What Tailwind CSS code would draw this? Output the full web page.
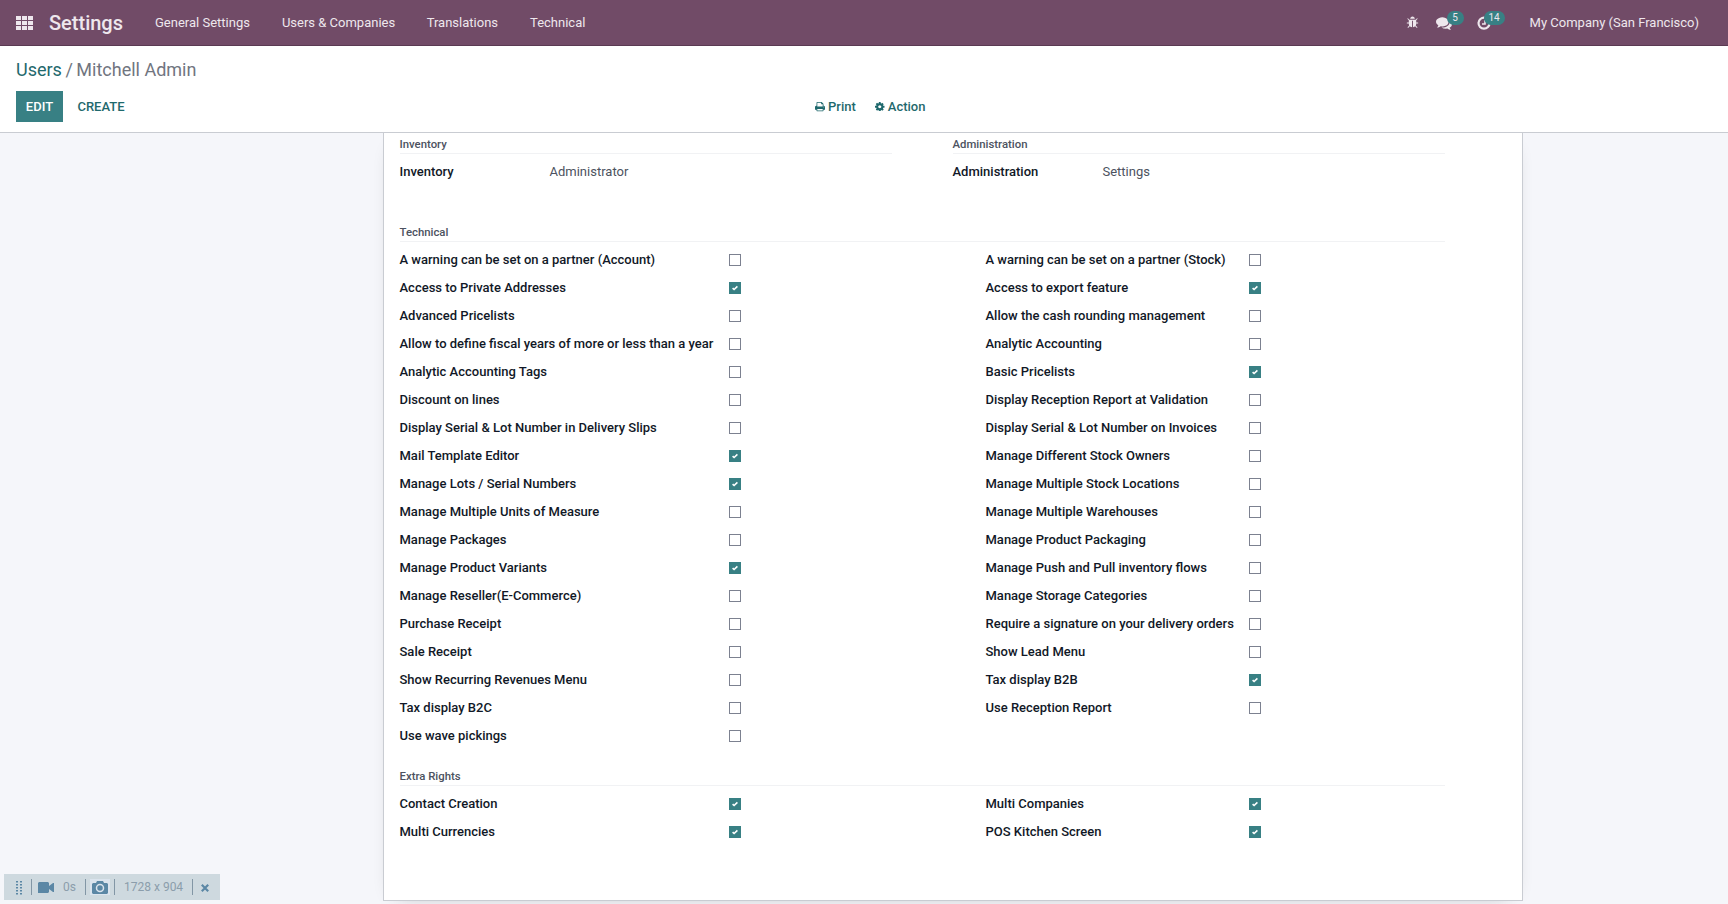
<!DOCTYPE html>
<html lang="en">
<head>
<meta charset="utf-8">
<title>Mitchell Admin - Settings</title>
<script src="https://cdn.jsdelivr.net/npm/@tailwindcss/browser@4"></script>
</head>
<body class="h-[904px] overflow-hidden bg-[#f5f6fa] font-['Roboto',sans-serif] text-[13px] leading-5 text-[#4c5260]">
<div class="flex h-full flex-col">
  <header class="flex h-[46px] shrink-0 items-center border-b border-[#5a3a52] bg-[#714b67] pl-4 pr-[29px] text-[#eee7ed]">
    <svg class="h-[14px] w-[17px]" viewBox="0 0 17 14" fill="currentColor"><path d="M0 0h5v4H0zM6 0h5v4H6zM12 0h5v4h-5zM0 5h5v4H0zM6 5h5v4H6zM12 5h5v4h-5zM0 10h5v4H0zM6 10h5v4H6zM12 10h5v4h-5z"/></svg>
    <h1 class="ml-4 w-[106px] text-xl font-medium">Settings</h1>
    <nav class="flex gap-8">
      <a>General Settings</a><a>Users &amp; Companies</a><a class="-ml-[0.500px]">Translations</a><a>Technical</a>
    </nav>
    <div class="ml-auto flex items-center">
      <svg class="size-[13px]" viewBox="0 0 1792 1792" fill="currentColor"><path d="M1696 960q0 26-19 45t-45 19h-224q0 171-67 290l208 209q19 19 19 45t-19 45q-18 19-45 19t-45-19l-198-197q-5 5-15 13t-42 28.500-65 36.500-82 29-97 13v-896h-128v896q-51 0-101.500-13.500t-87-33-66-39-43.500-32.500l-15-14-183 207q-20 21-48 21-24 0-43-16-19-18-20.500-44.500t15.500-46.500l202-227q-58-114-58-274h-224q-26 0-45-19t-19-45 19-45 45-19h224v-294l-173-173q-19-19-19-45t19-45 45-19 45 19l173 173h844l173-173q19-19 45-19t45 19 19 45-19 45l-173 173v294h224q26 0 45 19t19 45zm-480-576h-640q0-133 93.500-226.500t226.500-93.500 226.500 93.500 93.500 226.500z"/></svg>
      <div class="relative ml-[17px] mr-[25px]">
        <svg class="size-4" viewBox="0 0 1792 1792" fill="currentColor"><path d="M1408 768q0 139-94 257t-256.500 186.500-353.500 68.500q-86 0-176-16-124 88-278 128-36 9-86 16h-3q-11 0-20.500-8t-11.500-21q-1-3-1-6.500t.5-6.500 2-6l2.500-5 3.500-5.500 4-5 4.500-5 4-4.500q5-6 23-25t26-29.500 22.500-29 25-38.500 20.500-44q-124-72-195-177t-71-224q0-139 94-257t256.500-186.500 353.500-68.500 353.500 68.500 256.500 186.500 94 257zm384 256q0 120-71 224.500t-195 176.500q10 24 20.500 44t25 38.500 22.500 29 26 29.500 23 25q1 1 4 4.500t4.500 5 4 5 3.500 5.500l2.500 5 2 6 .5 6.500-1 6.500q-3 14-13 22t-22 7q-50-7-86-16-154-40-278-128-90 16-176 16-271 0-472-132 58 4 88 4 161 0 309-45t264-129q125-92 192-212t67-254q0-77-23-152 129 71 204 178t75 230z"/></svg>
        <span class="absolute -top-1 left-[11px] flex h-[14px] w-[17px] items-center justify-center rounded-full bg-[#388084] text-[10px] leading-none">5</span>
      </div>
      <div class="relative mr-[39px]">
        <svg class="size-[14px]" viewBox="0 0 14 14" fill="none" stroke="currentColor"><path stroke-width="2.200" d="M7.500 1.700A5.500 5.500 0 1 0 12.500 7"/><path stroke-width="1.600" d="M8 4v4H5"/></svg>
        <span class="absolute -top-[5px] left-[7px] flex h-[14px] w-[21px] items-center justify-center rounded-full bg-[#388084] text-[10px] leading-none">14</span>
      </div>
      <span>My Company (San Francisco)</span>
    </div>
  </header>

  <div class="z-10 flex h-[87px] shrink-0 flex-col border-b border-[#c9ccd2] bg-white px-4">
    <div class="mt-3 text-lg leading-6 text-[#71757f]"><a class="text-[#1f696d]">Users</a><span class="mx-[3.500px]">/</span>Mitchell Admin</div>
    <div class="mt-[9px] flex h-[31px] items-center font-medium text-[#1f696d]">
      <button class="h-full w-[47px] bg-[#388084] text-white">EDIT</button>
      <button class="ml-[14px] w-12">CREATE</button>
      <button class="ml-[690px] flex items-center gap-[3px]"><svg class="size-[10px]" viewBox="64 128 1664 1664" fill="currentColor"><path d="M448 1536h896v-256h-896v256zm0-640h896v-384h-160q-40 0-68-28t-28-68v-160h-640v640zm1152 64q0-26-19-45t-45-19-45 19-19 45 19 45 45 19 45-19 19-45zm128 0v416q0 13-9.500 22.500t-22.500 9.500h-224v160q0 40-28 68t-68 28h-960q-40 0-68-28t-28-68v-160h-224q-13 0-22.500-9.500t-9.500-22.500v-416q0-79 56.500-135.500t135.500-56.500h64v-544q0-40 28-68t68-28h672q40 0 88 20t76 48l152 152q28 28 48 76t20 88v256h64q79 0 135.500 56.500t56.500 135.500z"/></svg>Print</button>
      <button class="ml-[19.500px] flex items-center gap-[3px]"><svg class="size-[9.500px]" viewBox="128 128 1536 1536" fill="currentColor"><path d="M1152 896q0-106-75-181t-181-75-181 75-75 181 75 181 181 75 181-75 75-181zm512-109v222q0 12-8 23t-20 13l-185 28q-19 54-39 91 35 50 107 138 10 12 10 25t-9 23q-27 37-99 108t-94 71q-12 0-26-9l-138-108q-44 23-91 38-16 136-29 186-7 28-36 28h-222q-14 0-24.500-8.500t-11.500-21.500l-28-184q-49-16-90-37l-141 107q-10 9-25 9-14 0-25-11-126-114-165-168-7-10-7-23 0-12 8-23 15-21 51-66.500t54-70.500q-27-50-41-99l-183-27q-13-2-21-12.500t-8-23.500v-222q0-12 8-23t19-13l186-28q14-46 39-92-40-57-107-138-10-12-10-24 0-10 9-23 26-36 98.500-107.500t94.500-71.500q13 0 26 10l138 107q44-23 91-38 16-136 29-186 7-28 36-28h222q14 0 24.500 8.500t11.500 21.500l28 184q49 16 90 37l142-107q9-9 24-9 13 0 25 10 129 119 165 170 7 8 7 22 0 12-8 23-15 21-51 66.500t-54 70.500q26 50 41 98l183 28q13 2 21 12.500t8 23.500z"/></svg>Action</button>
    </div>
  </div>

  <main class="ml-[383px] h-[768px] w-[1140px] shrink-0 border border-t-0 border-[#c9ccd2] bg-white pl-[15.500px] pr-[77px] shadow-[0_5px_20px_-15px_rgba(0,0,0,0.45)]">
    <div class="flex justify-between">
      <section class="w-[492px]">
        <h2 class="h-[21px] border-b border-[#f1f2f4] pt-px text-[11.375px] font-medium">Inventory</h2>
        <div class="mt-2 flex h-5 items-center"><b class="w-[150px] font-medium text-[#111827]">Inventory</b><span>Administrator</span></div>
      </section>
      <section class="w-[492.500px]">
        <h2 class="h-[21px] border-b border-[#f1f2f4] pt-px text-[11.375px] font-medium">Administration</h2>
        <div class="mt-2 flex h-5 items-center"><b class="w-[150px] font-medium text-[#111827]">Administration</b><span>Settings</span></div>
      </section>
    </div>
    <section class="mt-[39px]">
      <h2 class="h-[21px] border-b border-[#f1f2f4] pt-px text-[11.375px] font-medium">Technical</h2>
      <div id="technical" class="mt-1 grid grid-cols-[586px_1fr] auto-rows-[28px]"></div>
    </section>
    <section class="mt-[15px]">
      <h2 class="h-[21px] border-b border-[#f1f2f4] pt-px text-[11.375px] font-medium">Extra Rights</h2>
      <div id="extra" class="mt-1 grid grid-cols-[586px_1fr] auto-rows-[28px]"></div>
    </section>
  </main>
</div>

<div class="absolute left-1 top-[874px] z-20 flex h-[26px] w-[216px] items-center bg-[#ced9df] text-xs text-[#8b9dab]">
  <svg class="ml-3 mt-px h-[14px] w-[6px] text-[#5b87a5]" viewBox="0 0 6 14" fill="currentColor"><path d="M0 0h2v1.500H0zM4 0h2v1.500H4zM0 3h2v1.500H0zM4 3h2v1.500H4zM0 6h2v1.500H0zM4 6h2v1.500H4zM0 9h2v1.500H0zM4 9h2v1.500H4zM0 12h2v1.500H0zM4 12h2v1.500H4z"/></svg>
  <i class="ml-[9px] h-4 w-px bg-[#8296a5]"></i>
  <svg class="ml-[6px] mt-px h-[11px] w-4 text-[#5b87a5]" viewBox="0 0 16 11" fill="currentColor"><path d="M1 0h9l1 1v3l4-3h1v9h-1l-4-3v3l-1 1H0V1z"/></svg>
  <span class="ml-[9px] w-[22px]">0s</span>
  <i class="h-4 w-px bg-[#8296a5]"></i>
  <span class="ml-1 flex h-4 w-5 items-center justify-center bg-[#dbe4ee]"><svg class="h-[13px] w-4 text-[#5b87a5]" viewBox="0 0 16 13"><path fill="currentColor" d="M5 0h6l1 2h3l1 1v9l-1 1H1l-1-1V3l1-1h3z"/><circle cx="8" cy="7" r="3.500" fill="none" stroke="#dbe4ee" stroke-width="1.500"/></svg></span>
  <i class="ml-1 h-4 w-px bg-[#8296a5]"></i>
  <span class="ml-[9px] w-[68px] whitespace-nowrap">1728 x 904</span>
  <i class="h-4 w-px bg-[#8296a5]"></i>
  <svg class="ml-2 mt-[2px] size-2 text-[#5b87a5]" viewBox="0 0 8 8" stroke="currentColor" stroke-width="2.200"><path d="M.8.8l6.400 6.400M7.200.8L.8 7.200"/></svg>
</div>

<script>
const technical = [
  ["A warning can be set on a partner (Account)", 0], ["A warning can be set on a partner (Stock)", 0],
  ["Access to Private Addresses", 1], ["Access to export feature", 1],
  ["Advanced Pricelists", 0], ["Allow the cash rounding management", 0],
  ["Allow to define fiscal years of more or less than a year", 0], ["Analytic Accounting", 0],
  ["Analytic Accounting Tags", 0], ["Basic Pricelists", 1],
  ["Discount on lines", 0], ["Display Reception Report at Validation", 0],
  ["Display Serial & Lot Number in Delivery Slips", 0], ["Display Serial & Lot Number on Invoices", 0],
  ["Mail Template Editor", 1], ["Manage Different Stock Owners", 0],
  ["Manage Lots / Serial Numbers", 1], ["Manage Multiple Stock Locations", 0],
  ["Manage Multiple Units of Measure", 0], ["Manage Multiple Warehouses", 0],
  ["Manage Packages", 0], ["Manage Product Packaging", 0],
  ["Manage Product Variants", 1], ["Manage Push and Pull inventory flows", 0],
  ["Manage Reseller(E-Commerce)", 0], ["Manage Storage Categories", 0],
  ["Purchase Receipt", 0], ["Require a signature on your delivery orders", 0],
  ["Sale Receipt", 0], ["Show Lead Menu", 0],
  ["Show Recurring Revenues Menu", 0], ["Tax display B2B", 1],
  ["Tax display B2C", 0], ["Use Reception Report", 0],
  ["Use wave pickings", 0],
];
const extra = [["Contact Creation", 1], ["Multi Companies", 1], ["Multi Currencies", 1], ["POS Kitchen Screen", 1]];
const on = '<span class="size-3 bg-[#388084]"><svg class="block size-3" viewBox="0 0 12 12" fill="none" stroke="#fff" stroke-width="1.600"><path d="M3.600 6.100l1.500 1.400L8.400 4.400"/></svg></span>';
const off = '<span class="size-3 border border-[#7c8190] bg-white"></span>';
const fill = (id, rows) => {
  document.getElementById(id).innerHTML = rows.map(([label, checked], i) =>
    `<label class="flex items-center"><span class="${i % 2 ? "w-[263.500px]" : "w-[329.500px]"} whitespace-nowrap font-medium text-[#111827]">${label.replace("&", "&amp;")}</span>${checked ? on : off}</label>`).join("");
};
fill("technical", technical);
fill("extra", extra);
</script>
</body>
</html>
